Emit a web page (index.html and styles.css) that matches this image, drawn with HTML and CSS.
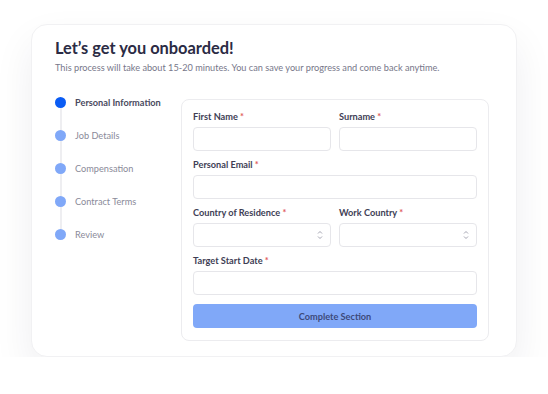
FILE: index.html
```html
<!DOCTYPE html>
<html lang="en">
<head>
  <meta charset="UTF-8">
  <meta name="viewport" content="width=device-width, initial-scale=1.0">
  <title>Onboarding</title>
  <link rel="stylesheet" href="styles.css">
</head>
<body>
  <main class="card">
    <header class="intro">
      <h1>Let’s get you onboarded!</h1>
      <p>This process will take about 15-20 minutes. You can save your progress and come back anytime.</p>
    </header>
    <div class="layout">
      <ol class="steps">
        <li class="step active"><span class="dot"></span>Personal Information</li>
        <li class="step"><span class="dot"></span>Job Details</li>
        <li class="step"><span class="dot"></span>Compensation</li>
        <li class="step"><span class="dot"></span>Contract Terms</li>
        <li class="step"><span class="dot"></span>Review</li>
      </ol>
      <form class="panel">
        <div class="row">
          <label class="field">
            <span class="label">First Name <em>*</em></span>
            <span class="input"></span>
          </label>
          <label class="field">
            <span class="label">Surname <em>*</em></span>
            <span class="input"></span>
          </label>
        </div>
        <label class="field">
          <span class="label">Personal Email <em>*</em></span>
          <span class="input"></span>
        </label>
        <div class="row">
          <label class="field">
            <span class="label">Country of Residence <em>*</em></span>
            <span class="input select"><svg width="6" height="10" viewBox="0 0 6 10"><path d="M1 3.5 3 1.5 5 3.5M1 6.5 3 8.5 5 6.5" fill="none" stroke="#9a9aa8" stroke-width="0.9"/></svg></span>
          </label>
          <label class="field">
            <span class="label">Work Country <em>*</em></span>
            <span class="input select"><svg width="6" height="10" viewBox="0 0 6 10"><path d="M1 3.5 3 1.5 5 3.5M1 6.5 3 8.5 5 6.5" fill="none" stroke="#9a9aa8" stroke-width="0.9"/></svg></span>
          </label>
        </div>
        <label class="field">
          <span class="label">Target Start Date <em>*</em></span>
          <span class="input"></span>
        </label>
        <button type="button" class="submit">Complete Section</button>
      </form>
    </div>
  </main>
</body>
</html>
```

FILE: styles.css
```css
* { box-sizing: border-box; }

body {
  margin: 0;
  background: #fff;
  font-family: Lato, "Noto Sans", sans-serif;
  color: #2d2d45;
}

.card {
  width: 486px;
  height: 333px;
  margin: 24px 0 0 31px;
  padding: 12px 23px 0 23px;
  background: #fff;
  border: 1px solid #f1f1f3;
  border-radius: 16px;
  box-shadow: 0 18px 40px rgba(30, 30, 60, 0.07);
}

.intro h1 {
  margin: 0;
  font-size: 16.4px;
  font-weight: 700;
  line-height: 22px;
  color: #2b2b44;
}

.intro p {
  margin: 3px 0 0;
  font-size: 9.2px;
  line-height: 12px;
  color: #77778a;
}

.layout {
  display: flex;
  margin-top: 25px;
}

.steps {
  list-style: none;
  margin: -13px 0 0;
  padding: 0;
  width: 126px;
  align-self: flex-start;
  position: relative;
}

.steps::before {
  content: "";
  position: absolute;
  left: 5px;
  top: 16px;
  bottom: 16px;
  width: 1.5px;
  background: #eeeef1;
}

.step {
  position: relative;
  display: flex;
  align-items: center;
  height: 33px;
  font-size: 9.2px;
  color: #8a8a99;
}

.step.active {
  color: #4a4a5e;
  font-weight: 700;
}

.dot {
  width: 11px;
  height: 11px;
  border-radius: 50%;
  background: #80a8f8;
  margin-right: 9px;
}

.active .dot { background: #0a5cf4; }

.panel {
  width: 308px;
  height: 242px;
  padding: 11px 11px 0 11px;
  border: 1px solid #ececef;
  border-radius: 8px;
  display: flex;
  flex-direction: column;
  gap: 8px;
}

.row {
  display: flex;
  gap: 8px;
}

.row .field { flex: 1; }

.field {
  display: flex;
  flex-direction: column;
  gap: 4px;
}

.label {
  font-size: 9.2px;
  font-weight: 700;
  line-height: 12px;
  color: #3e3e55;
}

.label em {
  font-style: normal;
  color: #e05a5a;
}

.input {
  display: flex;
  align-items: center;
  justify-content: flex-end;
  height: 24px;
  padding-right: 7px;
  border: 1px solid #e6e6ea;
  border-radius: 4px;
  background: #fff;
}

.submit {
  margin-top: 1px;
  height: 24px;
  border: 0;
  border-radius: 4px;
  background: #80a8f8;
  font-family: inherit;
  font-size: 9.2px;
  font-weight: 700;
  color: #3d4a7a;
}
```
